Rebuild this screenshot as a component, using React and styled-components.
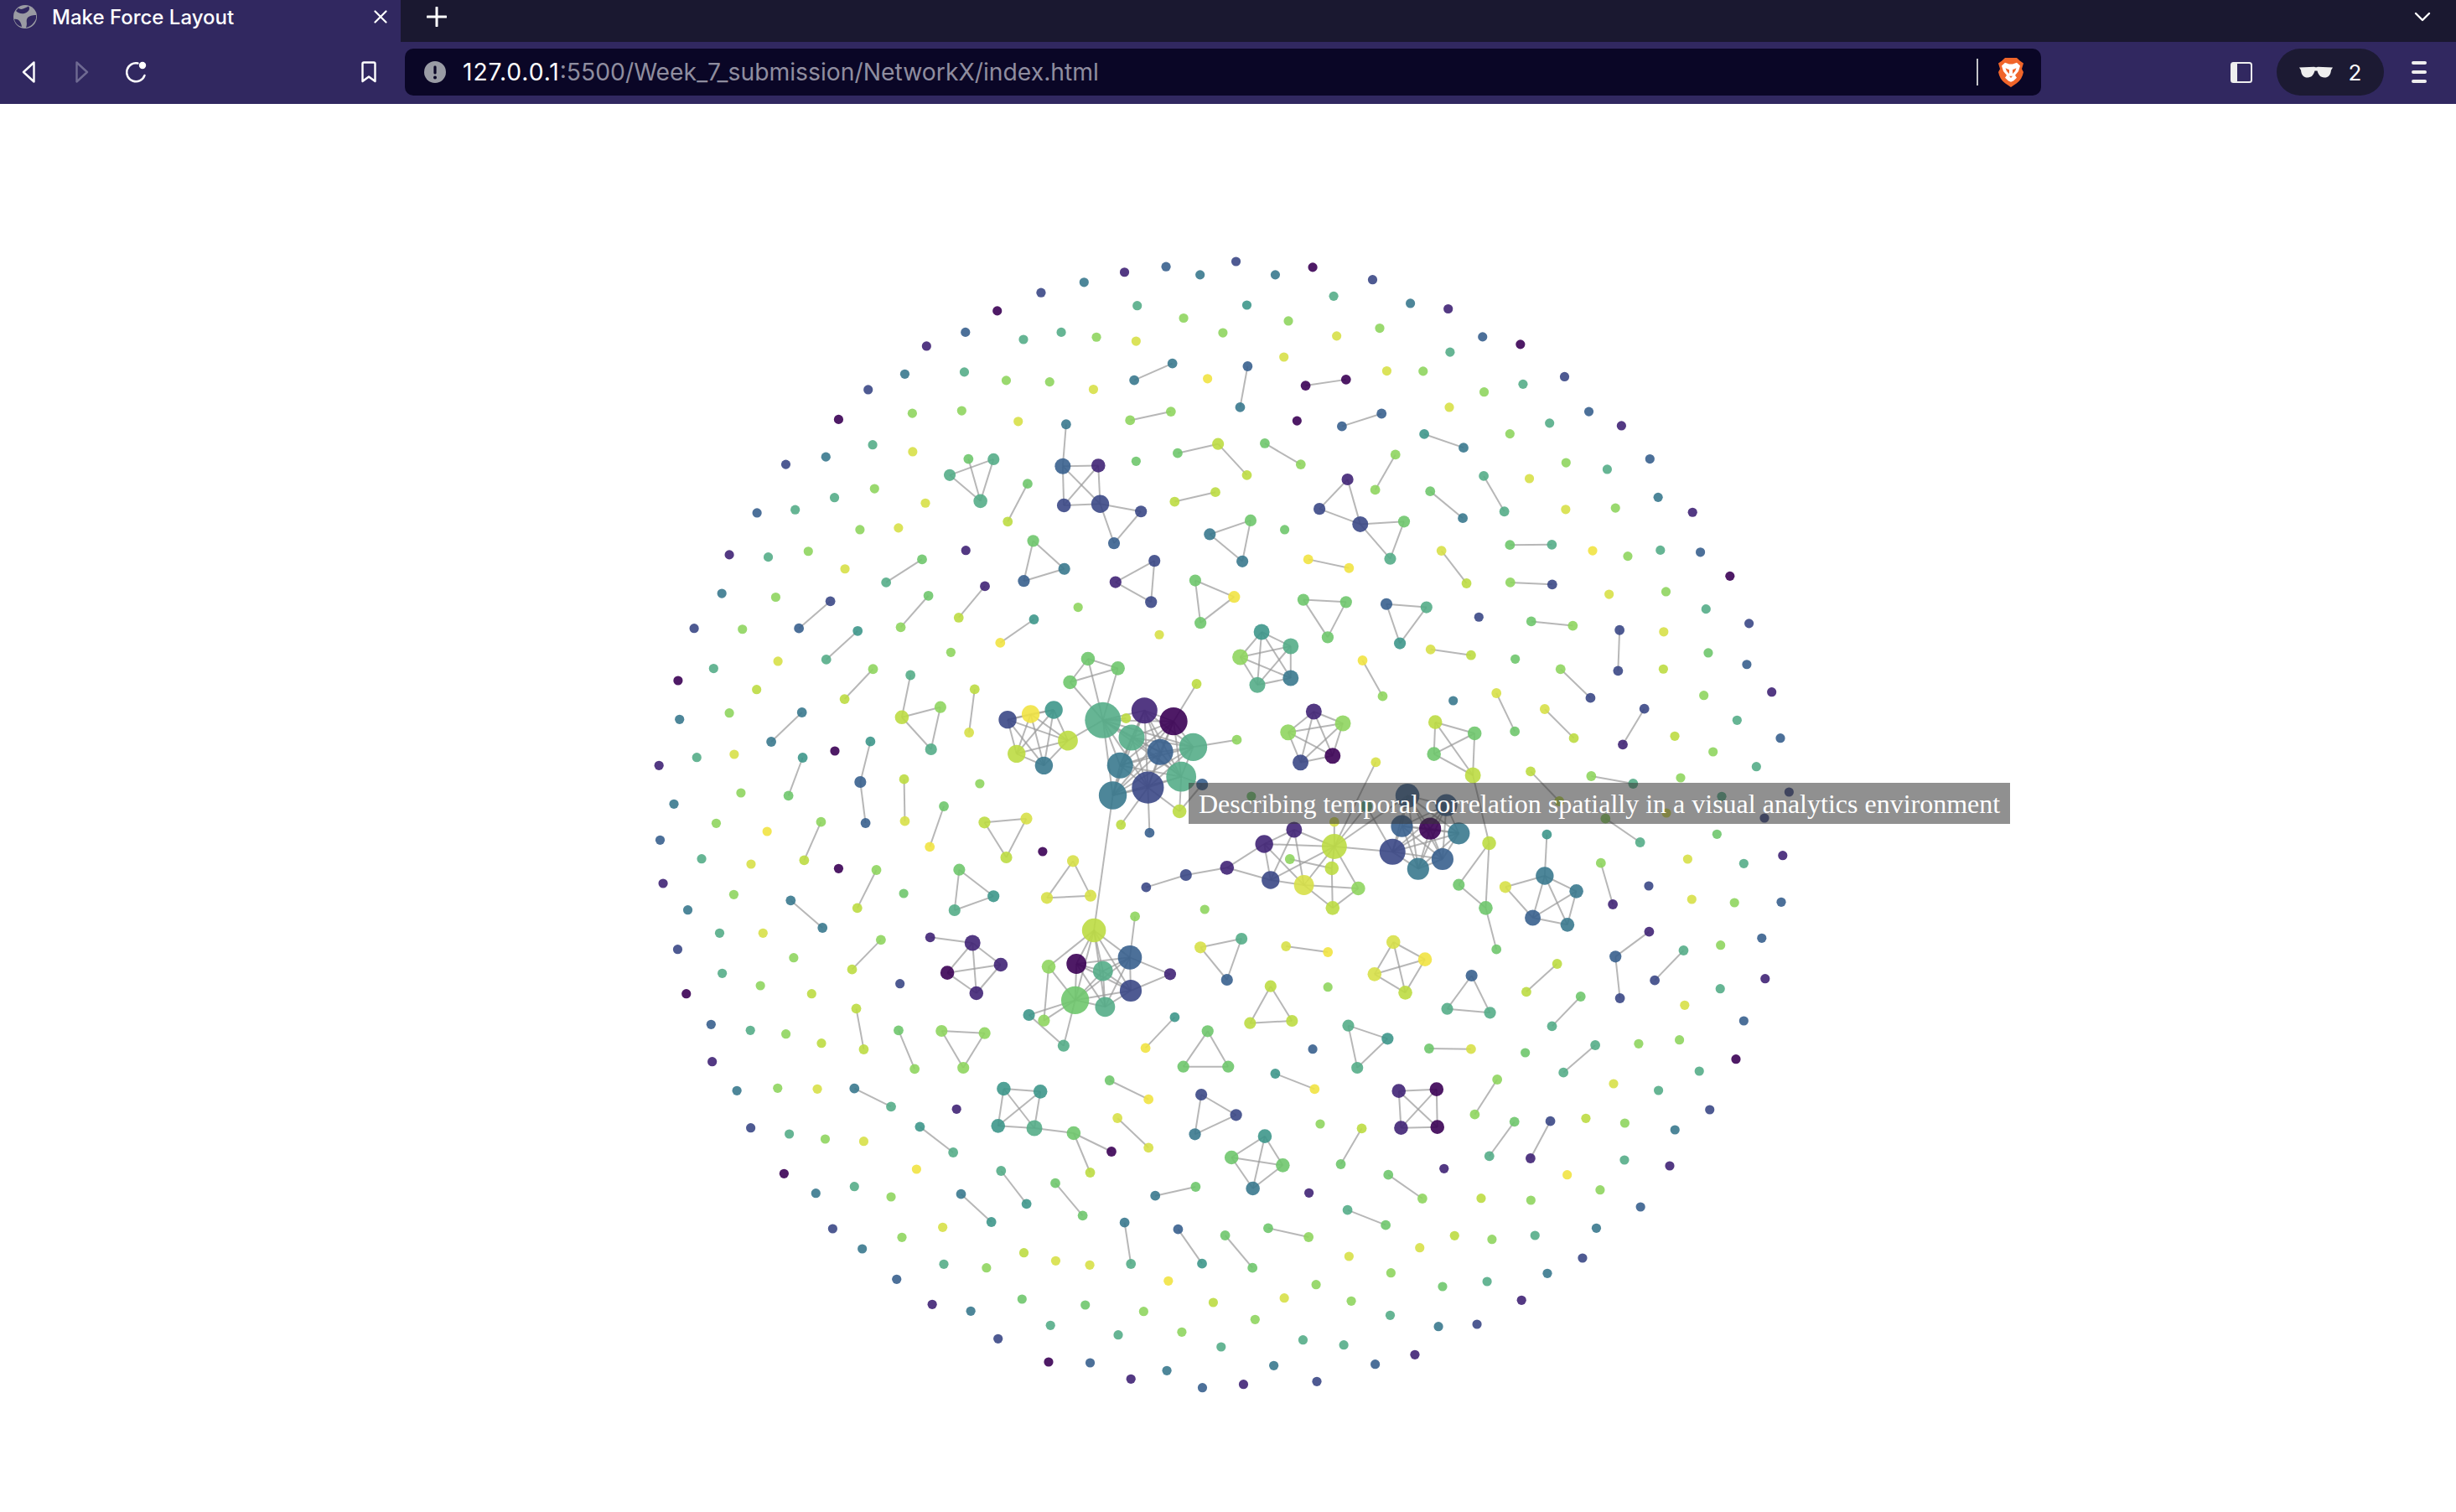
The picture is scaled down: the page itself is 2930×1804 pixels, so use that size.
import styled, { createGlobalStyle } from "styled-components";

const GlobalStyle = createGlobalStyle`
    html, body {
        margin: 0;
        padding: 0;
        background: #fff;
    }
`

// viridis, drawn at 0.9 opacity over white
const colors = {
    p: "#3b0155", v: "#402475", i: "#3b4886", b: "#38608e", t: "#3a798e", g: "#3e978b",
    m: "#55ad88", l: "#6fc76d", n: "#8fd55f", y: "#bcdb42", e: "#d7e048", f: "#f1e342",
}

// positions were read per area of the page: [left, top, scaleX, scaleY] turns them into page pixels
const areas = [
    {
        box: [750, 280, 2.24, 2.904],
        dots: "1436 111 b,1325 130 v,1527 139 t,1217 165 t,1102 201 i,1359 246 m,985 264 p,1483 289 n,900 338 b,1156 338 m,1250 355 n,1055 363 m,1356 369 e,796 386 v,738 483 t,897 476 m,1009 505 n,1125 510 n,1242 536 e,640 537 i,1547 499 f,758 619 n,890 610 n,1041 647 e,561 640 p,652 728 m,759 752 e,527 770 t,420 796 i,1356 785 l,657 880 n,550 911 m,445 953 m,343 964 b,793 930 e,618 1022 n,721 1016 e,269 1109 v,373 1117 m,480 1097 n,578 1158 e,901 1094 v,249 1243 t,393 1256 n,175 1364 i,304 1367 n,1201 1291 n,1418 1386 e,399 1478 e,861 1447 n,227 1503 m,132 1545 p",
        pairs: "1453 446 t 1351 504 t,1449 613 n 1340 643 n,1459 925 y 1568 892 y,1066 863 l 1013 994 y,784 1125 l 688 1205 m,539 1270 i 455 1364 b,801 1251 l 727 1360 n,952 1218 v 882 1327 y,1083 1333 g 993 1414 f,612 1373 g 528 1472 m,653 1505 n 577 1609 y",
        groups: [
            ["1467 757 l,1575 725 y,1652 833 y", "0-1 1-2"],
            ["1553 1038 t,1662 990 l,1640 1132 t"],
            ["858 833 m,908 777 l,975 778 m,940 923 m", "0-2 0-3 1-3 2-3"],
            ["1169 657 t,1160 802 b,1255 800 v,1163 938 i,1260 933 i,1369 959 i,1297 1069 b", "0-1 *1,2,3,4 4-5 4-6 5-6"],
            ["1081 1061 l,1164 1158 t,1056 1200 b"],
            ["1405 1130 i,1301 1204 v,1396 1273 i"],
            ["1514 1198 l,1528 1345 l,1618 1255 f"],
            ["753 1526 m,730 1672 y,833 1637 n,808 1783 m", "0-1 1-2 1-3 2-3"],
        ],
    },
    {
        box: [1450, 280, 2.24, 2.904],
        dots: "55 93 i,160 139 t,260 113 p,420 156 i,316 213 m,84 244 g,195 299 n,20 340 n,521 238 t,622 257 v,439 324 n,324 351 e,183 424 e,714 354 b,815 380 p,627 407 m,458 472 e,555 473 n,718 545 n,822 518 m,933 492 i,625 598 e,218 645 p,998 613 b,1085 662 v,893 653 m,787 690 n,937 790 n,1047 813 m,1161 777 b,839 845 e,936 952 e,1069 947 n,1183 910 t,1275 962 v,185 1022 l,1008 1095 f,1102 1114 n,1189 1093 m,1296 1100 b,1052 1246 e,1204 1237 n,1375 1183 p,704 1325 i,1311 1297 m,1426 1347 i,1198 1376 e,1317 1449 l,1420 1489 b,1197 1505 y",
        pairs: "86 456 b 66 598 t,241 523 p 349 502 p,444 620 b 338 664 b,558 691 g 663 738 t,132 723 l 228 796 n,481 762 n 427 884 n,574 889 l 661 982 t,717 836 m 772 959 m,248 1125 f 357 1155 f,604 1095 e 671 1208 y,787 1075 l 899 1074 m,788 1205 n 900 1212 i,844 1340 l 955 1355 n,1080 1370 i 1076 1511 i,575 1437 e 683 1457 y",
        groups: [
            ["353 848 v,278 950 i,387 1003 i,504 994 l,467 1123 m", "0-1 0-2 1-2 2-3 2-4 3-4"],
            ["235 1265 l,349 1273 l,300 1395 l"],
            ["457 1280 b,564 1291 m,493 1416 g"],
        ],
    },
    {
        box: [750, 820, 2.24, 3],
        dots: "136 115 t,269 92 n,342 8 y,182 251 m,282 240 e,81 280 v,551 228 p,300 378 n,121 418 t,234 487 n,370 516 f,84 547 b,195 614 m,327 633 e,92 702 v,561 649 p,735 738 l,281 742 n,158 797 t,243 880 m,359 880 e,131 938 i,441 968 n,250 1024 m,352 1068 n,154 1097 p,489 1097 y,725 1061 i",
        pairs: "463 90 t 381 195 t,465 252 g 427 388 l,736 329 y 738 479 e,514 482 n 469 619 y,662 654 n 611 790 y,433 763 t 518 861 t,674 904 n 597 1010 y",
        groups: [["646 194 g,619 339 b,633 486 b", "0-1 1-2"]],
    },
    {
        box: [1100, 740, 1.96, 3],
        dots: "135 585 n,770 630 l,282 828 p,661 1035 n,949 1313 n,1242 288 t,1387 139 l",
        pairs: "123 247 y 110 402 e,1030 144 f 1077 272 n,1343 261 e 1386 398 l,1456 318 e 1524 422 y,1493 175 n 1563 278 i,1423 541 y 1490 648 y,51 666 l 18 811 f,851 1167 e 949 1188 f,1485 1230 y 1413 1330 y,1540 1347 l 1473 1453 m",
        groups: [
            ["200 356 i,254 336 f,308 321 g,341 431 y,221 478 y,285 520 t,423 358 m,520 323 v,588 362 p,490 420 m,557 472 b,634 454 m,463 520 t,606 560 m,528 599 i,446 627 t,477 351 y,642 228 y,736 428 n,655 588 b,602 684 y,465 732 y,532 761 b,388 138 l,458 172 l,346 222 l,402 1110 y,361 1230 p,486 1207 b,296 1240 n,423 1256 m,358 1360 l,488 1326 i,428 1384 m,580 1267 v,250 1413 g,285 1433 n,331 1523 m,498 1060 n",
                "*0,1,2,3,4,5 3-6 *6,7,8,9,10,11,12,13,14,15 6-16 8-17 11-18 13-19 19-20 14-20 13-20 14-21 14-22 *23,24,25,6 15-26 *26,27,28,30,31,32,33 28-34 32-34 26-29 29-31 29-36 31-35 31-36 31-37 35-37 38-28"],
            ["870 750 v,800 801 v,964 810 y 15,815 930 i,893 948 e,1020 960 n,960 1030 y,860 855 n,958 888 y,964 722 e,713 886 v,617 912 i,524 956 i,1061 508 e,1039 666 m,1135 628 b,1226 662 b,1122 737 b,1188 746 p,1255 763 t,1100 829 i,1217 855 b,1160 890 t",
                "12-11 11-10 10-1 10-3 1-0 1-2 1-3 1-4 0-2 0-3 0-4 2-3 2-4 2-8 2-5 2-9 2-13 2-20 2-15 2-14 14-20 3-4 4-5 4-6 5-6 7-8 8-6 *15,16,17,18,19,20,21,22"],
            ["1200 365 y,1292 405 l,1197 479 l,1288 555 y,1326 798 y,1255 947 l,1318 1030 l,1343 1178 l", "*0,1,2,3 3-4 4-5 4-6 5-6 6-7"],
            ["1461 767 g,1456 915 t,1364 955 e,1530 970 t,1428 1065 b,1509 1090 t", "0-1 1-2 1-3 1-4 1-5 2-4 3-4 3-5 4-5"],
            ["146 724 y,244 710 e,197 849 y"],
            ["87 893 l,167 988 g,76 1038 m"],
            ["353 862 e,292 994 e,394 986 e"],
            ["651 1171 e,747 1140 m,713 1287 b"],
            ["1285 1272 b,1228 1391 m,1328 1405 m"],
            ["815 1310 y,767 1442 y,865 1434 y"],
            ["1102 1152 e,1176 1214 f,1058 1267 e,1130 1333 y"],
            ["794 42 g,862 93 m,744 132 n,862 207 t,784 232 m"],
            ["916 327 v,984 369 n,856 401 n,960 485 p,885 509 i"],
            ["19 1135 v,118 1155 v,59 1262 p,184 1233 v,127 1335 v", "0-1 1-2 1-3 1-4 2-3 2-4 3-4"],
        ],
    },
    {
        box: [1450, 1000, 2.24, 3],
        dots: "1262 75 e,1412 91 m,1516 62 v,1158 171 i,1273 219 e,1387 231 n,1512 229 b,1350 383 n,1460 358 b,1469 503 v,1349 539 m,1254 598 e",
        pairs: "1030 89 n 1062 237 v,1251 402 m 1174 509 i",
        groups: [["1159 335 v,1069 424 b,1081 573 i", "0-1 1-2"]],
    },
    {
        box: [1880, 780, 3, 3],
        dots: "458 149 n,701 137 v,577 238 m,732 302 b,354 295 y,491 351 n,646 404 m,375 444 n,522 511 m,763 495 i,324 570 e,675 588 i,505 646 l",
        pairs: "245 197 i 168 325 v,55 438 n 205 465 m,106 590 n 230 675 m",
        groups: [],
    },
    {
        box: [780, 1200, 2.24, 3],
        dots: "153 67 b,258 88 m,353 101 n,448 134 y,156 200 v,222 304 t,331 295 n,437 298 e,809 370 v,259 437 i,362 459 m,458 477 n,561 485 e,702 585 f,348 601 p,433 671 t,536 647 m,634 684 n,478 798 i,557 870 t,663 829 n,772 793 e,989 884 y,1074 913 e,1165 928 e,775 925 m,889 938 n,649 979 b,1375 985 f,744 1069 v,847 1093 t,984 1050 l,1153 1071 l,1309 1094 n,1495 1062 y,1060 1144 m,1241 1178 m,1411 1168 n,1516 1221 m,920 1192 i,1055 1275 p,1166 1278 b,1275 1336 v,1371 1306 t,1466 1367 b",
        pairs: "541 10 y 561 156 y,654 88 l 697 226 n,1392 41 g 1314 151 f,536 296 t 634 361 m,1218 267 l 1322 335 f,1239 402 e 1322 508 e,711 433 g 800 525 m,928 591 m 996 709 g,1073 635 l 1146 751 l,821 674 t 902 774 g,1448 648 l 1340 680 t,1258 776 t 1275 924 m,1401 800 b 1465 923 g",
        groups: [
            ["769 90 n,884 98 n,827 222 n"],
            ["1480 91 l,1415 218 l,1535 218 l"],
            ["935 297 g,1033 307 g,920 430 g,1017 438 m,1122 456 l,1223 522 p,1166 597 y", "*0,1,2,3 3-4 4-5 4-6"],
            ["1463 318 i,1556 391 i,1446 460 t"],
        ],
    },
    {
        box: [1450, 1200, 2.24, 3],
        dots: "260 155 b,828 168 l,1131 136 n,1240 122 n,1412 54 b,1391 191 p,1293 234 m,1184 303 m,1064 279 e,280 423 n,990 403 y,1094 420 n,1321 372 i,1228 444 t,1093 552 m,1214 573 v,611 583 v,250 670 v,940 605 f,1028 659 n,710 689 y,843 696 n,1136 720 b,639 823 y,739 836 n,854 822 m,1018 796 t,546 866 e,357 897 e,981 903 i,887 958 t,469 956 n,726 987 m,607 1005 l,269 998 n,184 1046 e,363 1057 n,818 1054 v,106 1123 n,467 1108 m,596 1148 t,699 1140 i,234 1196 m,343 1214 m,533 1249 v,427 1283 b,156 1288 t,75 1355 v,271 1345 i",
        pairs: "571 153 l 683 155 e,1015 141 m 930 239 m,160 243 g 265 298 f,753 264 n 693 389 n,391 439 y 335 567 l,799 415 l 732 538 m,895 413 i 842 546 v,462 605 l 553 690 n,353 731 m 455 785 l,141 796 l 249 828 n,26 822 l 99 938 l",
        groups: [
            ["355 71 m,460 118 g,379 222 m"],
            ["490 305 v,591 299 p,496 437 v,593 434 p"],
            ["132 467 g,43 543 l,180 571 l,100 654 t"],
        ],
    },
]

function buildGraph() {
    const nodes = []
    const links = []
    areas.forEach(({ box, dots, pairs, groups }) => {
        const [left, top, sx, sy] = box
        const place = (x, y, c, size) => {
            const node = { x: left + Number(x) / sx, y: top + Number(y) / sy, c: colors[c], size: size ? Number(size) : 0, degree: 0 }
            nodes.push(node)
            return node
        }
        const link = (a, b) => {
            a.degree++
            b.degree++
            links.push([a, b])
        }
        const clique = (list) => {
            list.forEach((a, i) => list.slice(i + 1).forEach((b) => link(a, b)))
        }
        dots.split(",").forEach((d) => {
            const [x, y, c] = d.split(" ")
            place(x, y, c)
        })
        pairs.split(",").forEach((p) => {
            const [x1, y1, c1, x2, y2, c2] = p.split(" ")
            link(place(x1, y1, c1), place(x2, y2, c2))
        })
        groups.forEach(([list, spec]) => {
            const members = list.split(",").map((n) => place(...n.split(" ")))
            if (!spec) {
                clique(members)
                return
            }
            spec.split(" ").forEach((token) => {
                if (token[0] === "*") {
                    clique(token.slice(1).split(",").map((i) => members[i]))
                } else {
                    const [a, b] = token.split("-")
                    link(members[a], members[b])
                }
            })
        })
    })
    return { nodes, links }
}

const graph = buildGraph()
const radius = (n) => n.size || (n.degree === 0 ? 5.6 : 4.7 + n.degree * 1.2)

function ForceGraph() {
    return (
        <GraphSvg viewBox="0 124 2930 1680">
            <g stroke="#999" strokeOpacity="0.7" strokeWidth="2">
                {graph.links.map(([a, b], i) => (
                    <line key={i} x1={a.x} y1={a.y} x2={b.x} y2={b.y} />
                ))}
            </g>
            <g fillOpacity="0.9">
                {graph.nodes.map((n, i) => (
                    <circle key={i} cx={n.x} cy={n.y} r={radius(n)} fill={n.c} />
                ))}
            </g>
        </GraphSvg>
    )
}

export default function App() {
    return (
        <>
            <GlobalStyle />
            <Page>
                <TabStrip>
                    <Tab>
                        <svg width="28" height="28" viewBox="0 0 28 28">
                            <circle cx="14" cy="14" r="14" fill="#9a9ba3" />
                            <path d="M6 3.5 C9 7 15 3 18 1.5 C21 5 17 9 13 10 C9 11 5 9 3 7Z" fill="#312860" />
                            <path d="M27 12 C23 12 17 13 16 17 C15 20 17 22 15 27 C20 26 25 22 27 16Z" fill="#312860" />
                            <path d="M1 17 C5 16 9 19 10 26 C5 25 2 21 1 17Z" fill="#312860" />
                        </svg>
                        <TabTitle>Make Force Layout</TabTitle>
                        <TabClose>
                            <svg width="16" height="16" viewBox="0 0 16 16">
                                <path d="M1.5 1.5 L14.5 14.5 M14.5 1.5 L1.5 14.5" stroke="#fff" strokeWidth="2.2" strokeLinecap="round" />
                            </svg>
                        </TabClose>
                    </Tab>
                    <NewTab>
                        <svg width="24" height="24" viewBox="0 0 24 24">
                            <path d="M12 1 V23 M1 12 H23" stroke="#fff" strokeWidth="3" strokeLinecap="round" />
                        </svg>
                    </NewTab>
                    <StripMenu>
                        <svg width="20" height="12" viewBox="0 0 20 12">
                            <path d="M2 2 L10 10 L18 2" fill="none" stroke="#fff" strokeWidth="2.4" strokeLinecap="round" strokeLinejoin="round" />
                        </svg>
                    </StripMenu>
                </TabStrip>
                <Toolbar>
                    <NavButton>
                        <svg width="18" height="26" viewBox="0 0 18 26">
                            <path d="M15.5 1.5 L3 13 L15.5 24.5 Z" fill="none" stroke="#fff" strokeWidth="2.4" strokeLinejoin="round" />
                        </svg>
                    </NavButton>
                    <NavButton>
                        <svg width="18" height="26" viewBox="0 0 18 26">
                            <path d="M2.5 1.5 L15 13 L2.5 24.5 Z" fill="none" stroke="#6f6a92" strokeWidth="2.4" strokeLinejoin="round" />
                        </svg>
                    </NavButton>
                    <NavButton>
                        <svg width="28" height="28" viewBox="0 0 28 28">
                            <path d="M16.5 3.5 A11 11 0 1 0 24.5 18" fill="none" stroke="#fff" strokeWidth="2.4" strokeLinecap="round" />
                            <circle cx="22" cy="6" r="4.2" fill="#fff" />
                        </svg>
                    </NavButton>
                    <BookmarkButton>
                        <svg width="20" height="26" viewBox="0 0 20 26">
                            <path d="M2.5 3 Q2.5 1.5 4 1.5 H16 Q17.5 1.5 17.5 3 V24 L10 18.5 L2.5 24 Z" fill="none" stroke="#fff" strokeWidth="2.4" strokeLinejoin="round" />
                        </svg>
                    </BookmarkButton>
                    <UrlBar>
                        <svg width="26" height="26" viewBox="0 0 26 26">
                            <circle cx="13" cy="13" r="13" fill="#9a9ca5" />
                            <rect x="11.4" y="5.5" width="3.2" height="10" rx="1.4" fill="#0a0626" />
                            <circle cx="13" cy="19.4" r="2" fill="#0a0626" />
                        </svg>
                        <UrlText>
                            <UrlHost>127.0.0.1</UrlHost>:5500/Week_7_submission/NetworkX/index.html
                        </UrlText>
                        <UrlDivider />
                        <svg width="32" height="36" viewBox="0 0 32 38" preserveAspectRatio="none">
                            <path d="M9 1 H23 L27 5 L31 8 L29 15 L31 19 C30 25 27 30 23 33 L16 38 L9 33 C5 30 2 25 1 19 L3 15 L1 8 L5 5 Z" fill="#f0652a" />
                            <path d="M9 7 L14 9 H18 L23 7 L27 11 L25 18 L21 23 L23 26 L19 30 L16 31.5 L13 30 L9 26 L11 23 L7 18 L5 11 Z" fill="#fff" />
                            <path d="M9.5 14 L14 16 L14 21 L11 18 Z M22.5 14 L18 16 L18 21 L21 18 Z M14 24 H18 L16 26.5 Z" fill="#f0652a" />
                        </svg>
                    </UrlBar>
                    <SidebarButton>
                        <svg width="26" height="25" viewBox="0 0 26 25">
                            <rect x="1" y="1" width="24" height="23" rx="2.5" fill="none" stroke="#eee" strokeWidth="2" />
                            <path d="M2 2 H8 V23 H2 Z" fill="#eee" />
                        </svg>
                    </SidebarButton>
                    <ShieldsPill>
                        <svg width="40" height="14" viewBox="0 0 40 15" preserveAspectRatio="none">
                            <path d="M0 1.5 L18 0.8 C19.5 1.6 20.5 1.6 22 0.8 L40 1.5 L38 5 C37.5 11 35 14.5 30 14.5 C25 14.5 23 11 21.5 6 H18.5 C17 11 15 14.5 10 14.5 C5 14.5 2.5 11 2 5 Z" fill="#eee" />
                        </svg>
                        <PillCount>2</PillCount>
                    </ShieldsPill>
                    <MenuButton>
                        <MenuBar />
                        <MenuBar />
                        <MenuBar />
                    </MenuButton>
                </Toolbar>
                <Stage>
                    <ForceGraph />
                    <Tooltip>Describing temporal correlation spatially in a visual analytics environment</Tooltip>
                </Stage>
            </Page>
        </>
    )
}

const Page = styled.div`
    width: 2930px;
    height: 1804px;
    overflow: hidden;
    display: flex;
    flex-direction: column;
    background: #fff;
    font-family: "Inter", sans-serif;
`
const TabStrip = styled.div`
    height: 50px;
    display: flex;
    align-items: center;
    background-color: #1a1830;
`
const Tab = styled.div`
    width: 478px;
    height: 50px;
    box-sizing: border-box;
    padding: 0 16px 10px 16px;
    display: flex;
    align-items: center;
    background-color: #312860;
`
const TabTitle = styled.div`
    margin-left: 18px;
    font-size: 24px;
    font-weight: 500;
    color: #fff;
    flex: 1;
`
const TabClose = styled.div`
    display: flex;
    margin-right: 0;
`
const NewTab = styled.div`
    display: flex;
    margin-left: 31px;
    margin-bottom: 10px;
`
const StripMenu = styled.div`
    display: flex;
    margin-left: auto;
    margin-right: 30px;
    margin-bottom: 10px;
`
const Toolbar = styled.div`
    height: 74px;
    box-sizing: border-box;
    padding: 8px 0 10px 2px;
    display: flex;
    align-items: center;
    background-color: #312860;
`
const NavButton = styled.div`
    width: 64px;
    display: flex;
    justify-content: center;
`
const BookmarkButton = styled(NavButton)`
    margin-left: 214px;
`
const UrlBar = styled.div`
    width: 1952px;
    height: 56px;
    margin-left: 11px;
    box-sizing: border-box;
    padding: 0 20px 0 23px;
    display: flex;
    align-items: center;
    background-color: #0a0626;
    border-radius: 10px;
`
const UrlText = styled.div`
    margin-left: 20px;
    font-size: 28.3px;
    color: #8f8d9f;
    flex: 1;
`
const UrlHost = styled.span`
    color: #fff;
    letter-spacing: 0.9px;
`
const UrlDivider = styled.div`
    width: 2px;
    height: 32px;
    margin-right: 23px;
    background-color: #c4c4c8;
`
const SidebarButton = styled.div`
    display: flex;
    margin-left: 226px;
`
const ShieldsPill = styled.div`
    width: 128px;
    height: 56px;
    margin-left: 29px;
    display: flex;
    align-items: center;
    justify-content: center;
    gap: 19px;
    background-color: #1c1a33;
    border-radius: 28px;
`
const PillCount = styled.div`
    font-size: 26px;
    color: #fff;
`
const MenuButton = styled.div`
    width: 18px;
    margin-left: 33px;
    display: flex;
    flex-direction: column;
    gap: 7.5px;
`
const MenuBar = styled.div`
    height: 3.5px;
    border-radius: 2px;
    background-color: #eee;
`
const Stage = styled.div`
    position: relative;
    flex: 1;
`
const GraphSvg = styled.svg`
    display: block;
    width: 2930px;
    height: 1680px;
`
const Tooltip = styled.div`
    position: absolute;
    left: 1418px;
    top: 810px;
    height: 49px;
    box-sizing: border-box;
    padding: 0 12px;
    display: flex;
    align-items: center;
    font-family: "Liberation Serif", serif;
    font-size: 32px;
    line-height: 1;
    white-space: nowrap;
    color: #fff;
    background-color: rgba(53, 53, 53, 0.55);
`
